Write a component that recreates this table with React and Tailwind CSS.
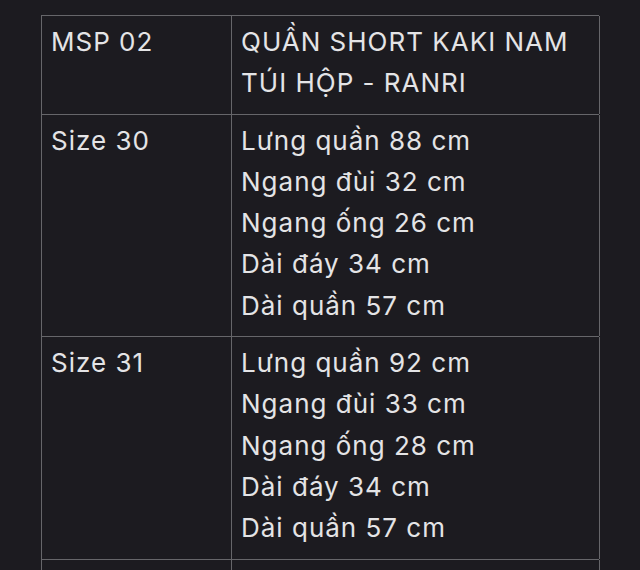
import React from "react";

const rows = [
  { label: "MSP 02", lines: ["QUẦN SHORT KAKI NAM", "TÚI HỘP - RANRI"] },
  {
    label: "Size 30",
    lines: ["Lưng quần 88 cm", "Ngang đùi 32 cm", "Ngang ống 26 cm", "Dài đáy 34 cm", "Dài quần 57 cm"],
  },
  {
    label: "Size 31",
    lines: ["Lưng quần 92 cm", "Ngang đùi 33 cm", "Ngang ống 28 cm", "Dài đáy 34 cm", "Dài quần 57 cm"],
  },
  {
    label: "Size 32",
    lines: ["Lưng quần 96 cm", "Ngang đùi 34 cm", "Ngang ống 28 cm", "Dài đáy 35 cm", "Dài quần 58 cm"],
  },
];

export default function App() {
  return (
    <div
      className="w-[640px] h-[570px] overflow-hidden bg-[#1c1b20] pt-[15px] pl-[41px] text-[#e4e4e6] text-[26px] leading-[41.3px] tracking-[1px]"
      style={{ fontFamily: 'Inter, "Liberation Sans", sans-serif' }}
    >
      <div className="w-[558px] border-l border-t border-[#66666a]">
        {rows.map((row) => (
          <div key={row.label} className="grid grid-cols-[190px_368px] border-b border-[#66666a]">
            <div className="border-r border-[#66666a] pl-[9px] pt-[5px] pb-[10px]">{row.label}</div>
            <div className="border-r border-[#66666a] pl-[9px] pt-[5px] pb-[10px]">
              {row.lines.map((line) => (
                <div key={line}>{line}</div>
              ))}
            </div>
          </div>
        ))}
      </div>
    </div>
  );
}
